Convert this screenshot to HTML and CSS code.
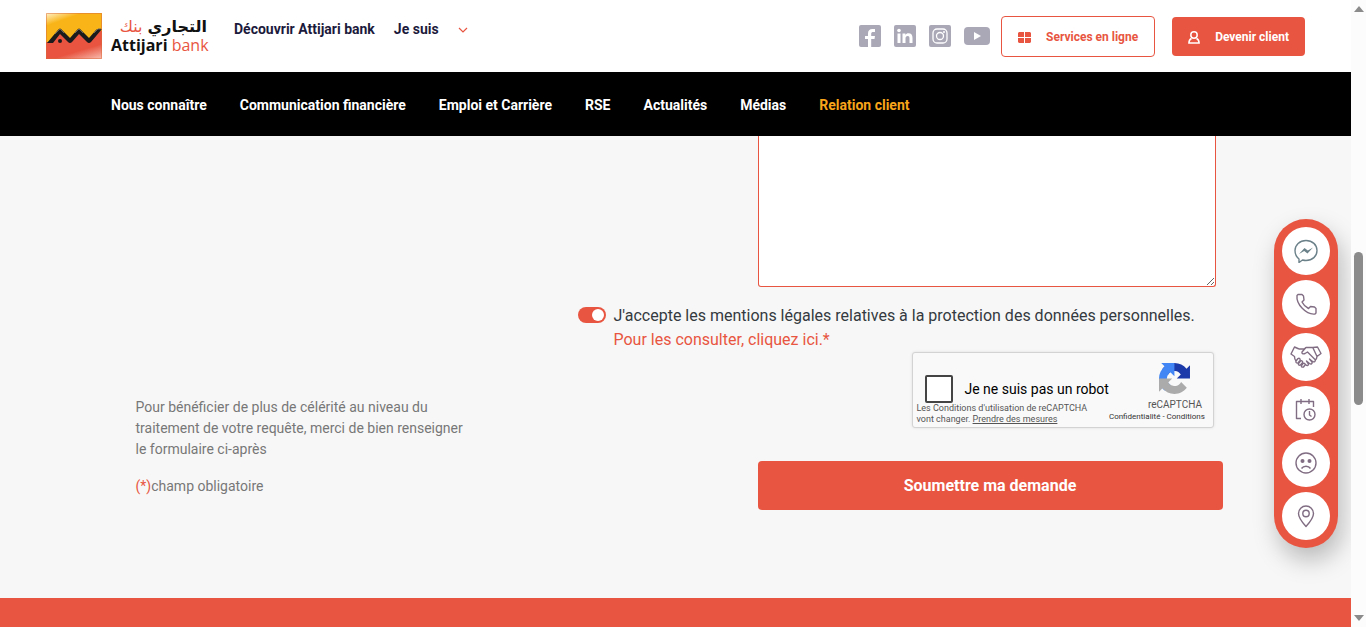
FILE: index.html
```html
<!DOCTYPE html>
<html lang="fr">
<head>
<meta charset="utf-8">
<meta name="viewport" content="width=device-width, initial-scale=1">
<title>Attijari bank - Relation client</title>
<link rel="stylesheet" href="styles.css">
</head>
<body>
<div class="app">
  <div class="page">
    <header class="topbar">
      <a class="logo" href="#" aria-label="Attijari bank">
        <svg class="logo-mark" viewBox="0 0 56 46" aria-hidden="true">
          <defs>
            <linearGradient id="gold" x1="0" y1="0" x2=".4" y2=".6"><stop offset="0" stop-color="#fff3cf"/><stop offset=".5" stop-color="#f9b518"/><stop offset="1" stop-color="#f9b518"/></linearGradient>
            <linearGradient id="red" x1=".4" y1="0" x2="1" y2="1"><stop offset="0" stop-color="#e8543f"/><stop offset=".6" stop-color="#e8543f"/><stop offset="1" stop-color="#f8c0b4"/></linearGradient>
          </defs>
          <path fill="url(#gold)" d="M0 0h56v30H0z"/>
          <path fill="url(#red)" d="M0 29h3l11-10 10 9 9-9 10 9 11-10h2v28H0z"/>
          <path fill="#1b1a1c" d="M1 30 12 17q2-3 4 0l8 8 7-8q2-3 4 0l8 8 7-8q1-1 2-1h4L45 29q-2 2-4 0l-8-8-7 8q-2 2-4 0l-8-8-7 9z"/>
          <path fill="none" stroke="#68635f" d="M9 21l5-5 4 4M29 20l4-4 4 4M48 20l4-4h3"/>
          <circle cx="14" cy="28" r="2" fill="#1b1a1c"/>
          <path fill="none" stroke="#d9693a" d="M.5.500h55v45H.5z" opacity=".5"/>
        </svg>
        <span class="logo-text">
          <span class="logo-ar" lang="ar" dir="rtl"><b>التجاري</b> <i>بنك</i></span>
          <span class="logo-fr"><b>Attijari</b> <i>bank</i></span>
        </span>
      </a>
      <nav class="top-links" aria-label="Espaces">
        <a href="#">Découvrir Attijari bank</a>
        <a href="#">Je suis
          <svg class="chevron" viewBox="0 0 10 6" aria-hidden="true"><path d="M1 1l4 4 4-4" fill="none" stroke="#e85541" stroke-width="1.200"/></svg>
        </a>
      </nav>
      <div class="social">
        <a href="#" aria-label="Facebook"><svg width="22" height="22" viewBox="0 0 22 22"><rect width="22" height="22" rx="2" fill="#aaa7b7"/><path fill="#fff" d="M9 22v-8H6v-3h3V8.500C9 5.500 10.600 4 13.300 4H16v3h-1.700C12.800 7 12.200 7.600 12.200 8.800V11H16l-.5 3h-3.300v8z"/></svg></a>
        <a href="#" aria-label="LinkedIn"><svg width="22" height="22" viewBox="0 0 22 22"><rect width="22" height="22" rx="2" fill="#aaa7b7"/><circle cx="5" cy="5.500" r="1.800" fill="#fff"/><path fill="#fff" d="M3.500 8.500h3V18h-3zM8.500 8.500h2.900v1.400c.6-1 1.600-1.600 3-1.600 3 0 4.100 1.700 4.100 4.700v5h-3v-4.600c0-1.700-.5-2.500-1.800-2.500-1.500 0-2.200 1-2.200 2.600V18h-3z"/></svg></a>
        <a href="#" aria-label="Instagram"><svg width="22" height="22" viewBox="0 0 22 22"><rect width="22" height="22" rx="2" fill="#aaa7b7"/><rect x="4" y="4" width="14" height="14" rx="4" fill="none" stroke="#fff" stroke-width="1.300"/><circle cx="11" cy="11" r="3.500" fill="none" stroke="#fff" stroke-width="1.300"/><circle cx="15" cy="7" r="1" fill="#fff"/></svg></a>
        <a href="#" aria-label="YouTube"><svg width="26" height="18" viewBox="0 0 26 18"><rect width="26" height="18" rx="4" fill="#aaa7b7"/><path fill="#fff" d="M10 5l7 4-7 4z"/></svg></a>
      </div>
      <div class="actions">
        <a class="btn btn-outline" href="#">
          <svg width="13" height="11" viewBox="0 0 13 11" aria-hidden="true"><path fill="#e85541" d="M1 0h5v5H0V1zM7 0h5l1 1v4H7zM0 6h6v5H1l-1-1zM7 6h6v4l-1 1H7z"/></svg>
          Services en ligne
        </a>
        <a class="btn btn-solid" href="#">
          <svg width="12" height="13" viewBox="0 0 12 13" aria-hidden="true"><g fill="none" stroke="#fff" stroke-width="1.500"><circle cx="6" cy="4" r="3.200"/><path d="M3.500 7.500C1.700 8.300.9 9.700.9 12h10.200c0-2.300-.8-3.700-2.600-4.500"/></g></svg>
          Devenir client
        </a>
      </div>
    </header>

    <nav class="mainnav" aria-label="Menu principal">
      <a href="#">Nous connaître</a>
      <a href="#">Communication financière</a>
      <a href="#">Emploi et Carrière</a>
      <a href="#">RSE</a>
      <a href="#">Actualités</a>
      <a href="#">Médias</a>
      <a class="active" href="#" aria-current="page">Relation client</a>
    </nav>

    <main class="content">
      <div class="container">
        <section class="intro">
          <p>Pour bénéficier de plus de célérité au niveau du traitement de votre requête, merci de bien renseigner le formulaire ci-après</p>
          <p><span class="accent">(*)</span>champ obligatoire</p>
        </section>
        <form class="claim">
          <textarea class="message" aria-label="Message"></textarea>
          <div class="consent">
            <input class="switch" type="checkbox" id="consent" checked>
            <div class="consent-text">
              <label for="consent">J'accepte les mentions légales relatives à la protection des données personnelles.</label>
              <a href="#">Pour les consulter, cliquez ici.*</a>
            </div>
          </div>
          <div class="captcha">
            <div class="captcha-left">
              <div class="captcha-check">
                <input type="checkbox" id="robot">
                <label for="robot">Je ne suis pas un robot</label>
              </div>
              <p>Les Conditions d'utilisation de reCAPTCHA vont changer. <a href="#">Prendre des mesures</a></p>
            </div>
            <div class="captcha-brand">
              <svg width="31" height="31" viewBox="0 0 64 64" aria-hidden="true">
                <path fill="#1c3aa9" d="M64 31.955l-.033-1.370V4.687l-7.160 7.160C50.948 4.674 42.033.093 32.050.093c-10.400 0-19.622 4.960-25.458 12.640l11.736 11.860a15.550 15.550 0 0 1 4.754-5.334c2.050-1.600 4.952-2.906 8.968-2.906.485 0 .860.057 1.135.163 4.976.393 9.288 3.140 11.828 7.124l-8.307 8.307L64 31.953"/>
                <path fill="#4285f4" d="M31.862.094l-1.370.033H4.594l7.160 7.160C4.580 13.147 0 22.060 0 32.046c0 10.400 4.960 19.622 12.640 25.458l11.860-11.736a15.550 15.550 0 0 1-5.334-4.754c-1.600-2.050-2.906-4.952-2.906-8.968 0-.485.057-.860.163-1.135.393-4.976 3.140-9.288 7.124-11.828l8.307 8.307L31.860.095"/>
                <path fill="#ababab" d="M.001 32.045l.033 1.370v25.898l7.160-7.160c5.860 7.173 14.774 11.754 24.760 11.754 10.400 0 19.622-4.960 25.458-12.640l-11.736-11.860a15.550 15.550 0 0 1-4.754 5.334c-2.050 1.600-4.952 2.906-8.968 2.906-.485 0-.860-.057-1.135-.163-4.976-.393-9.288-3.140-11.828-7.124l8.307-8.307L.001 32.045"/>
              </svg>
              <span class="captcha-name">reCAPTCHA</span>
              <span class="captcha-links"><a href="#">Confidentialité</a> - <a href="#">Conditions</a></span>
            </div>
          </div>
          <button class="submit" type="submit">Soumettre ma demande</button>
        </form>
      </div>
    </main>
    <footer class="footer"></footer>
  </div>

  <div class="scrollbar" aria-hidden="true">
    <svg width="10" height="6" viewBox="0 0 10 6"><path fill="#8b8b8b" d="M0 6 5 0l5 6z"/></svg>
    <span class="thumb"></span>
    <svg class="down" width="10" height="6" viewBox="0 0 10 6"><path fill="#8b8b8b" d="M0 0h10L5 6z"/></svg>
  </div>

  <aside class="quick" aria-label="Contact rapide">
    <a href="#" aria-label="Messenger"><svg viewBox="0 0 24 24"><g stroke="#6b8189"><path d="M5 20v3.500l3.500-2.500c1.200.3 2.300.5 3.500.5 6.400 0 11-4.300 11-10S18.400 1.500 12 1.500 1 6 1 11.500C1 15 2.600 18 5 20z"/><path fill="#6b8189" stroke="none" d="M5 15l5.500-6 3.300 2.500L19 8.500l-5.500 6-3.300-2.500z"/></g></svg></a>
    <a href="#" aria-label="Téléphone"><svg viewBox="0 0 24 24"><path d="M3 3.500C2 12 12 23 21 22l1-1v-4.500l-1.500-1.500-4-.5-2 2c-3-1.500-5-3.500-6.500-6.500l2-2L9.500 4 8 2.500H4z"/></svg></a>
    <a href="#" aria-label="Partenariat"><svg class="wide" viewBox="0 0 32 24"><path d="M9 4 4.500 2 1 9l3.500 2.500c0 2.500.5 3.500 1.500 4.500M9 4h5l2-1.500h7L27.500 2 31 8.500l-4 3M23 3l4 8.500c0 1.500-.5 2.500-2 4M16 2.500 12 7c-.5 1.500 1 2.500 3 1.500L17.500 7 25 14.500c1 1.500-.5 3-2.500 2l-3-2.500 2.500 3c.5 2-1 2.500-2.500 1.500L16.500 16l2 3c0 2-1.500 2-3 .5M6 16l2-2.500c1.500-.8 2.500.5 2 1.800L8 18c-1.500.5-2.500-.8-2-2zm2.500 2.500 2-2.500c1.500-.8 2.500.5 2 1.800L10.500 20c-1.500.8-2.500-.2-2-1.500zm3 2 1.500-2c1.500-.8 2.500.5 2 1.500l-1.500 2c-1.500.5-2.500-.2-2-1.500z"/></svg></a>
    <a href="#" aria-label="Rendez-vous"><svg viewBox="0 0 24 24"><path d="M7 20.500H2.500v-17h17V9M2.500 5V3.500h17V7M7 1v5M15 1v5"/><circle cx="15.500" cy="16.500" r="5.500"/><path d="M15.500 13v4l2 1.500"/></svg></a>
    <a href="#" aria-label="Réclamation"><svg viewBox="0 0 24 24"><circle cx="12" cy="12" r="10"/><g fill="#816d83" stroke="none"><circle cx="8.500" cy="10" r="2"/><circle cx="15.500" cy="10" r="2"/></g><path d="M7.500 17.500c2-3 7-3 9 0"/></svg></a>
    <a href="#" aria-label="Agences"><svg viewBox="0 0 24 24"><path d="M12 22.500C7 17 4.500 13 4.500 9.500a7.500 7.500 0 0 1 15 0c0 3.500-2.500 7.500-7.500 13z"/><circle cx="12" cy="9.500" r="3.200"/></svg></a>
  </aside>
</div>
</body>
</html>
```
FILE: styles.css
```css
* { box-sizing: border-box; }

body {
  margin: 0;
  font-family: Roboto, "Liberation Sans", sans-serif;
  font-size: 14px;
  color: #212529;
  background: #f7f7f7;
}

a { color: inherit; text-decoration: none; }
svg { display: block; }
p { margin: 0; }

.app {
  display: grid;
  grid-template-columns: minmax(0, 1fr) 15px;
  min-height: 100vh;
}

.page { display: flex; flex-direction: column; }

.topbar {
  display: flex;
  align-items: center;
  height: 72px;
  padding: 0 46px;
  background: #fff;
}

.logo { display: flex; align-items: center; gap: 9px; }
.logo-mark { width: 56px; height: 46px; }
.logo-text { display: flex; flex-direction: column; width: 96px; color: #111; white-space: nowrap; }
.logo-text i { font-style: normal; font-weight: 400; color: #e85541; }
.logo-ar { font: 16px/18px "DejaVu Sans", sans-serif; }
.logo-fr { font: 16px/18px "Open Sans", sans-serif; }
.logo-text b, .logo-text i { display: inline-block; }

.top-links {
  display: flex;
  gap: 19px;
  margin: 0 auto 14px 27px;
  font-size: 14px;
  font-weight: 700;
  color: #1c1a3c;
}
.top-links a { display: flex; align-items: center; }
.chevron { width: 10px; height: 6px; margin: 2px 0 0 19px; }

.social { display: flex; align-items: center; gap: 13px; }

.actions { display: flex; align-items: center; gap: 17px; margin-left: 11px; }
.btn {
  display: flex;
  align-items: center;
  gap: 15px;
  padding: 2px 16px 0;
  border-radius: 4px;
  font-size: 12px;
  font-weight: 700;
  white-space: nowrap;
}
.btn-outline { height: 41px; border: 1px solid #e85541; color: #e85541; }
.btn-solid { height: 39px; background: #e85541; color: #fff; }

.mainnav {
  display: flex;
  align-items: center;
  gap: 33px;
  height: 64px;
  padding: 2px 111px 0;
  background: #000;
  color: #fff;
  font-size: 14px;
  font-weight: 700;
}
.mainnav .active { color: #f9a51a; }

.content { flex: 1; }
.container {
  display: grid;
  grid-template-columns: 442px minmax(0, 1fr);
  max-width: 1140px;
  margin: 0 auto;
  padding: 0 23px 0 30px;
}

.intro {
  display: flex;
  flex-direction: column;
  gap: 16px;
  width: 340px;
  padding-top: 261px;
  line-height: 21px;
  color: #777;
}
.accent { color: #e85541; }

.claim { display: flex; flex-direction: column; }
.message {
  height: 151px;
  margin: 0 7px 0 180px;
  border: 1px solid #e85541;
  border-top: 0;
  border-radius: 0 0 3px 3px;
  background: #fff;
  resize: both;
}

.consent { display: flex; gap: 8px; margin-top: 17px; font-size: 16px; line-height: 24px; color: #343a40; }
.switch {
  appearance: none;
  flex: none;
  display: flex;
  justify-content: flex-end;
  width: 28px;
  height: 16px;
  margin: 3px 0 0;
  padding: 2px;
  border-radius: 8px;
  background: #e85541;
}
.switch::before { content: ""; width: 12px; height: 12px; border-radius: 50%; background: #fff; }
.consent-text { display: flex; flex-direction: column; white-space: nowrap; }
.consent-text a { color: #e85541; }

.captcha {
  display: flex;
  justify-content: space-between;
  align-self: flex-end;
  width: 302px;
  height: 76px;
  margin-right: 9px;
  border: 1px solid #d3d3d3;
  border-radius: 3px;
  background: #f9f9f9;
  box-shadow: 0 0 3px rgba(0, 0, 0, .1);
  white-space: nowrap;
}
.captcha-left { padding: 22px 0 0 4px; }
.captcha-left p { width: 180px; font-size: 9px; line-height: 11px; color: #555; white-space: normal; }
.captcha-left p a { display: inline-block; text-decoration: underline; }
.captcha-check { display: flex; align-items: center; gap: 12px; padding-left: 8px; color: #000; }
.captcha-check input {
  appearance: none;
  width: 28px;
  height: 28px;
  margin: 0;
  border: 2px solid #444;
  border-radius: 2px;
  background: #fff;
}
.captcha-brand {
  display: flex;
  flex-direction: column;
  align-items: flex-end;
  padding: 10px 12px 0 0;
  color: #555;
}
.captcha-brand { padding-right: 12px; }
.captcha-brand svg { margin-right: 15px; }
.captcha-name { margin: 5px 3px 0 0; font-size: 10px; line-height: 12px; }
.captcha-links { font-size: 8px; line-height: 12px; color: #333; }

.submit {
  height: 49px;
  margin: 33px 0 0 180px;
  border: 0;
  border-radius: 4px;
  background: #e85541;
  color: #fff;
  font-family: inherit;
  font-size: 16px;
  font-weight: 700;
}

.footer { height: 29px; background: #e85541; }

.scrollbar {
  position: relative;
  z-index: 2;
  display: flex;
  flex-direction: column;
  align-items: center;
  padding: 6px 0;
  background: #fcfcfc;
}
.thumb { width: 9px; height: 153px; margin-top: 240px; border-radius: 5px; background: #8b8b8b; }
.down { margin-top: auto; }

.quick {
  position: fixed;
  top: 219px;
  right: 28px;
  z-index: 1;
  display: flex;
  flex-direction: column;
  gap: 5px;
  padding: 8px;
  border-radius: 32px;
  background: #e85541;
  box-shadow: 4px 12px 24px rgba(0, 0, 0, .25);
}
.quick a {
  display: grid;
  place-items: center;
  width: 48px;
  height: 48px;
  border-radius: 50%;
  background: #fff;
}
.quick svg {
  width: 24px;
  height: 24px;
  fill: none;
  stroke: #816d83;
  stroke-width: 1.4;
  stroke-linejoin: round;
}
.quick .wide { width: 32px; }
```
